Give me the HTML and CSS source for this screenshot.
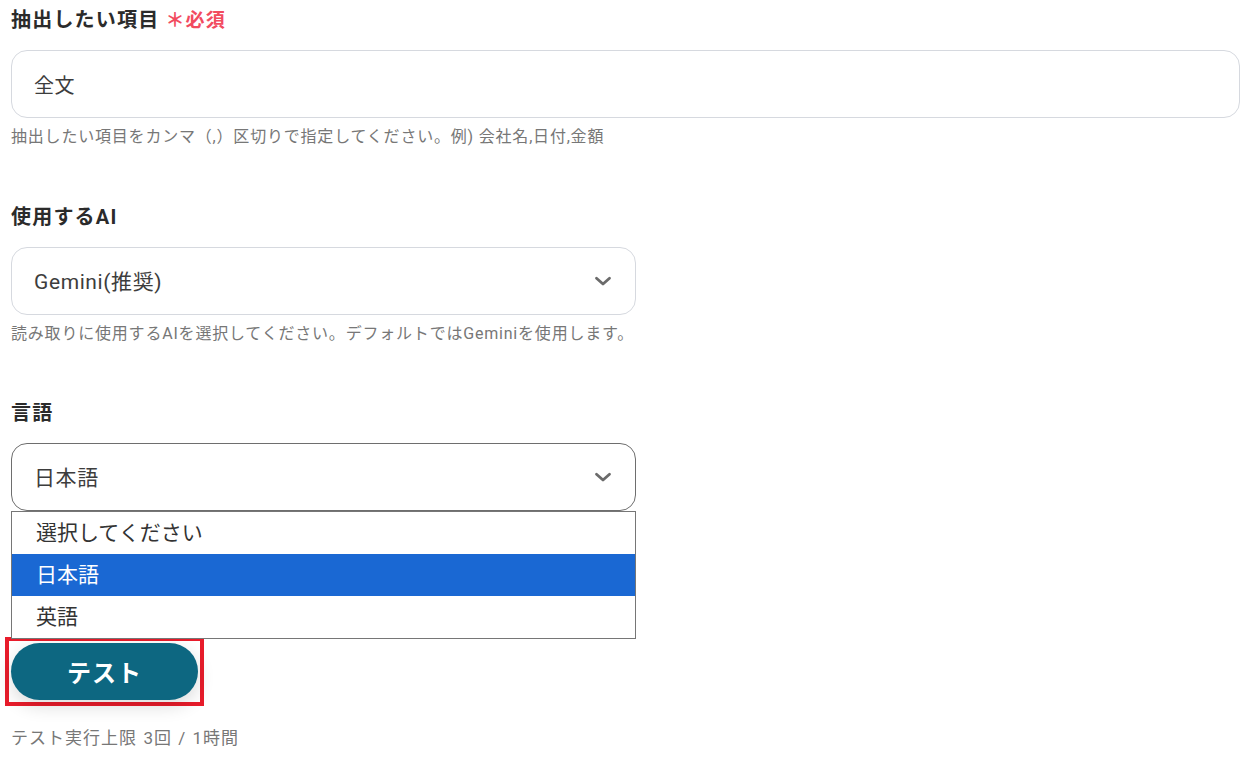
FILE: index.html
```html
<!DOCTYPE html>
<html lang="ja">
<head>
<meta charset="utf-8">
<title>フォーム</title>
<link rel="stylesheet" href="styles.css">
</head>
<body>
<div class="form">
  <div class="field">
    <div class="label">抽出したい項目<span class="req">＊必須</span></div>
    <div class="input wide">全文</div>
    <div class="help">抽出したい項目をカンマ（,）区切りで指定してください。例) 会社名,日付,金額</div>
  </div>
  <div class="field second">
    <div class="label">使用するAI</div>
    <div class="input select">
      <span class="val">Gemini(推奨)</span>
      <svg class="chev" width="18" height="12" viewBox="0 0 18 12"><path d="M2.5 3.2 L9 9 L15.5 3.2" fill="none" stroke="#6b6b6b" stroke-width="2.8" stroke-linecap="round" stroke-linejoin="round"/></svg>
    </div>
    <div class="help">読み取りに使用するAIを選択してください。デフォルトではGeminiを使用します。</div>
  </div>
  <div class="field last">
    <div class="label">言語</div>
    <div class="select-wrap">
      <div class="input select focused">
        <span class="val">日本語</span>
        <svg class="chev" width="18" height="12" viewBox="0 0 18 12"><path d="M2.5 3.2 L9 9 L15.5 3.2" fill="none" stroke="#6b6b6b" stroke-width="2.8" stroke-linecap="round" stroke-linejoin="round"/></svg>
      </div>
      <div class="dropdown">
        <div class="opt">選択してください</div>
        <div class="opt active">日本語</div>
        <div class="opt">英語</div>
      </div>
    </div>
  </div>
  <div class="btn-box"><button class="btn">テスト</button></div>
  <div class="limit">テスト実行上限 3回 / 1時間</div>
</div>
</body>
</html>
```
FILE: styles.css
```css
html, body {
  margin: 0;
  padding: 0;
  background: #fff;
}
body {
  font-family: Roboto, "Noto Sans CJK JP", sans-serif;
  color: #333;
}
.form {
  padding: 8px 0 0 11px;
}
.field {
  margin-bottom: 58px;
}
.field.second {
  margin-bottom: 57px;
}
.field.last {
  margin-bottom: 126px;
}
.label {
  font-size: 20px;
  font-weight: 700;
  line-height: 24px;
  height: 24px;
  color: #2b2b2b;
  letter-spacing: 0.06em;
}
.req {
  color: #f24b5f;
  font-size: 19px;
  margin-left: 6px;
  letter-spacing: 0.06em;
}
.input {
  box-sizing: border-box;
  margin-top: 18px;
  height: 68px;
  width: 625px;
  border: 1px solid #d6d9df;
  border-radius: 16px;
  padding: 0 22px;
  display: flex;
  align-items: center;
  font-size: 20px;
  color: #3d3d3d;
  letter-spacing: 0.03em;
}
.input.wide {
  width: 1229px;
}
.select {
  justify-content: space-between;
}
.select .val {
  font-size: 21px;
  margin-top: -2px;
}
.select .chev {
  margin-right: 1px;
}
.input.focused {
  border-color: #6e6e6e;
}
.help {
  margin-top: 9px;
  font-size: 16px;
  line-height: 20px;
  color: #777;
  letter-spacing: 0.05em;
}
.select-wrap {
  position: relative;
}
.dropdown {
  position: absolute;
  left: 0;
  top: 68px;
  width: 625px;
  box-sizing: border-box;
  border: 1px solid #767676;
  background: #fff;
  z-index: 2;
}
.opt {
  height: 42px;
  line-height: 42px;
  padding-left: 24px;
  font-size: 21px;
  color: #333;
}
.opt.active {
  background: #1a68d3;
  color: #fff;
}
.btn-box {
  display: inline-block;
  margin-left: -6px;
  border: 4px solid #e81c2b;
  padding: 2px;
}
.btn {
  display: block;
  width: 187px;
  height: 57px;
  border: none;
  border-radius: 29px;
  background: #0d6781;
  color: #fff;
  font-family: "Noto Sans CJK JP", sans-serif;
  font-size: 24px;
  font-weight: 700;
  letter-spacing: 0.04em;
  box-shadow: 0 6px 18px rgba(0, 0, 0, 0.14);
  padding: 0;
}
.limit {
  margin-top: 22px;
  font-size: 17px;
  line-height: 20px;
  color: #777;
  letter-spacing: 0.06em;
  word-spacing: 1px;
}
```
